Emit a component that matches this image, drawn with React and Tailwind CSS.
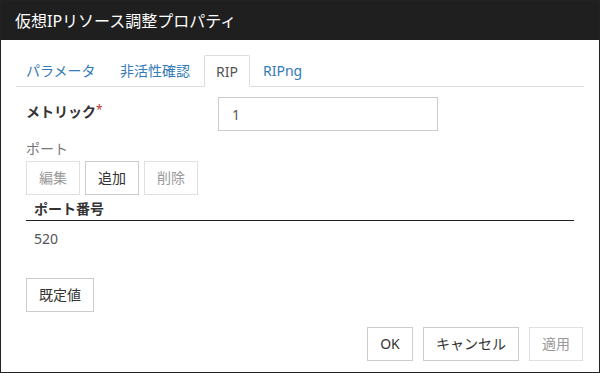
import React from 'react'

const font = { fontFamily: '"Noto Sans", "Noto Sans CJK JP", sans-serif' }

function Btn({ children, disabled, className = '' }) {
  return (
    <button
      type="button"
      className={`h-[34px] px-[12px] border bg-white text-[14px] leading-none ${
        disabled ? 'border-[#e0e0e0] text-[#9a9a9a]' : 'border-[#cccccc] text-[#333]'
      } ${className}`}
    >
      {children}
    </button>
  )
}

export default function App() {
  const tabs = [
    { label: 'パラメータ', w: 'w-[91px]' },
    { label: '非活性確認', w: 'w-[91px]' },
    { label: 'RIP', w: 'w-[46px]' },
    { label: 'RIPng', w: '' },
  ]
  const active = 'RIP'

  return (
    <div
      className="w-[600px] h-[373px] flex flex-col bg-white border border-[#222] overflow-hidden"
      style={font}
    >
      {/* Title bar */}
      <div className="h-[39px] shrink-0 bg-[#1f1f1f] text-white text-[16px] flex items-center px-[14px]">
        仮想IPリソース調整プロパティ
      </div>

      <div className="flex flex-col flex-1 px-[15px]">
        {/* Tabs */}
        <div className="mt-[15px] flex gap-[3px] border-b border-[#dddddd]">
          {tabs.map(t =>
            t.label === active ? (
              <div
                key={t.label}
                className={`${t.w} h-[32px] -mb-px px-[10px] flex items-center justify-center text-[14px] text-[#555] bg-white border border-[#dddddd] border-b-white rounded-t-[2px]`}
              >
                {t.label}
              </div>
            ) : (
              <div
                key={t.label}
                className={`${t.w} h-[31px] px-[10px] flex items-center text-[14px] text-[#337ab7] whitespace-nowrap`}
              >
                {t.label}
              </div>
            )
          )}
        </div>

        <div className="pl-[10px] pr-[10px] flex flex-col">
          {/* Metric */}
          <div className="mt-[10px] flex items-center">
            <div className="w-[192px] text-[14px] font-bold text-[#333] -mt-[5px]">
              メトリック<span className="text-[#c0392b] font-normal align-top text-[12px]">*</span>
            </div>
            <div className="w-[220px] h-[34px] border border-[#cccccc] flex items-center px-[13px] text-[14px] text-[#555]">
              1
            </div>
          </div>

          {/* Port */}
          <div className="mt-[8px] h-[20px] text-[14px] text-[#777] leading-[20px]">ポート</div>
          <div className="mt-[2px] flex gap-[5px]">
            <Btn disabled className="w-[54px]">編集</Btn>
            <Btn className="w-[54px]">追加</Btn>
            <Btn disabled className="w-[54px]">削除</Btn>
          </div>

          {/* Table */}
          <div className="mt-[1px] w-[548px]">
            <div className="h-[25px] pl-[8px] flex items-center text-[14px] font-bold text-[#333] border-b border-[#222]">
              ポート番号
            </div>
            <div className="h-[34px] pl-[8px] flex items-center text-[14px] text-[#555]">520</div>
          </div>

          <div className="mt-[23px]">
            <Btn className="w-[68px]">既定値</Btn>
          </div>
        </div>

        {/* Footer */}
        <div className="mt-[15px] flex justify-end gap-[10px] pr-[1px]">
          <Btn className="w-[46px]">OK</Btn>
          <Btn className="w-[96px]">キャンセル</Btn>
          <Btn disabled className="w-[54px]">適用</Btn>
        </div>
      </div>
    </div>
  )
}
